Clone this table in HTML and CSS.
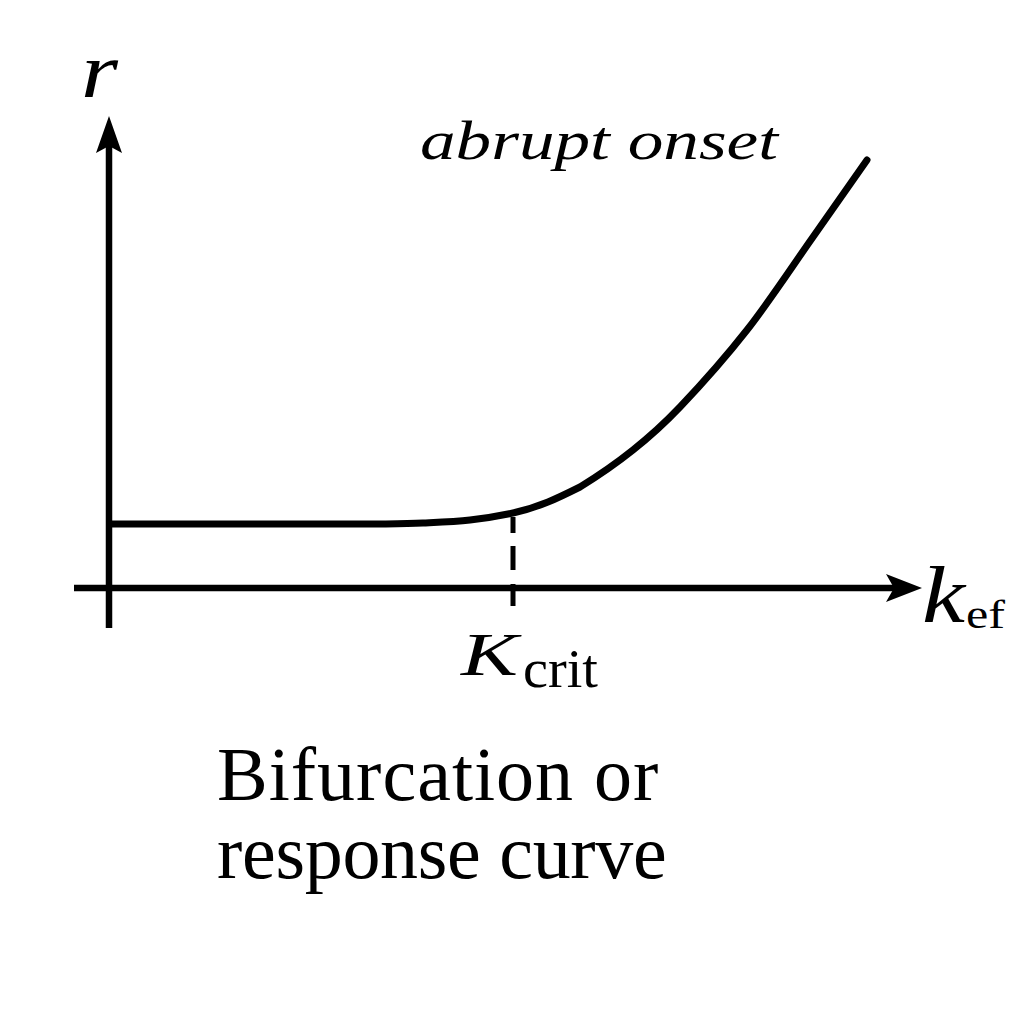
FILE: index.html
```html
<!DOCTYPE html>
<html lang="en">
<head>
<meta charset="utf-8">
<title>Bifurcation or response curve</title>
<link rel="stylesheet" href="styles.css">
</head>
<body>
<figure class="figure">
  <svg class="plot" width="1024" height="735" viewBox="0 0 1024 735" xmlns="http://www.w3.org/2000/svg">
    <line class="axis" x1="109" y1="628" x2="109" y2="140"/>
    <polygon class="head" points="109,116 122,153 109,146 96,153"/>
    <line class="axis" x1="74" y1="588" x2="900" y2="588"/>
    <polygon class="head" points="922,588 886,574 894,588 886,602"/>
    <line class="dash" x1="513" y1="517" x2="513" y2="606"/>
    <path class="curve" d="M112,524 H380 C394.3,523.8 408,523.7 423,523 C438,522.3 455,521.7 470,520 C485,518.3 500.2,515.8 513,513 C525.8,510.2 537,506.5 548,502 C559,497.5 567,493.5 580,487 C594.3,478.2 616.3,463.3 633,450 C649.7,436.7 661,427 680,407 C699,387 724.8,358.3 747,330 C769.2,301.7 793,265.3 813,237 C833,208.7 849,185.7 867,160"/>
    <text class="mi lbl-r" x="81" y="97" textLength="37" lengthAdjust="spacingAndGlyphs">r</text>
    <text class="mi lbl-onset" x="420" y="159" textLength="358" lengthAdjust="spacingAndGlyphs">abrupt onset</text>
    <text class="mi lbl-K" x="461" y="675" textLength="57" lengthAdjust="spacingAndGlyphs">K</text>
    <text class="rm lbl-crit" x="523" y="687" textLength="75" lengthAdjust="spacingAndGlyphs">crit</text>
    <text class="mi lbl-k" x="922" y="622" textLength="43" lengthAdjust="spacingAndGlyphs">k</text>
    <text class="rm lbl-ef" x="966" y="628" textLength="39" lengthAdjust="spacingAndGlyphs">ef</text>
  </svg>
  <figcaption class="caption">
    <span class="cap-line cap-line-1">Bifurcation or</span>
    <span class="cap-line cap-line-2">response curve</span>
  </figcaption>
</figure>
</body>
</html>
```
FILE: styles.css
```css
html, body {
  margin: 0;
  padding: 0;
  background: #ffffff;
}

.figure {
  margin: 0;
  width: 1024px;
  height: 1024px;
  display: flex;
  flex-direction: column;
}

.plot {
  display: block;
}

.axis {
  stroke: #000;
  stroke-width: 6.5;
  stroke-linecap: butt;
}

.head {
  fill: #000;
}

.dash {
  stroke: #000;
  stroke-width: 5;
  stroke-dasharray: 16 13 24 14 22 60;
}

.curve {
  fill: none;
  stroke: #000;
  stroke-width: 7;
  stroke-linecap: round;
  stroke-linejoin: round;
}

.mi {
  font-family: "Liberation Serif", "Times New Roman", serif;
  font-style: italic;
  fill: #000;
}

.rm {
  font-family: "Liberation Serif", "Times New Roman", serif;
  font-style: normal;
  fill: #000;
}

.lbl-r { font-size: 78px; }
.lbl-onset { font-size: 55px; }
.lbl-K { font-size: 62px; }
.lbl-crit { font-size: 54px; }
.lbl-k { font-size: 80px; }
.lbl-ef { font-size: 40px; }

.caption {
  padding-left: 217px;
  font-family: "Liberation Serif", "Times New Roman", serif;
  font-size: 76px;
  line-height: 78px;
  color: #000;
}

.cap-line {
  display: block;
  white-space: nowrap;
}

.cap-line-1 { letter-spacing: 1px; }
.cap-line-2 { letter-spacing: -0.3px; }
```
